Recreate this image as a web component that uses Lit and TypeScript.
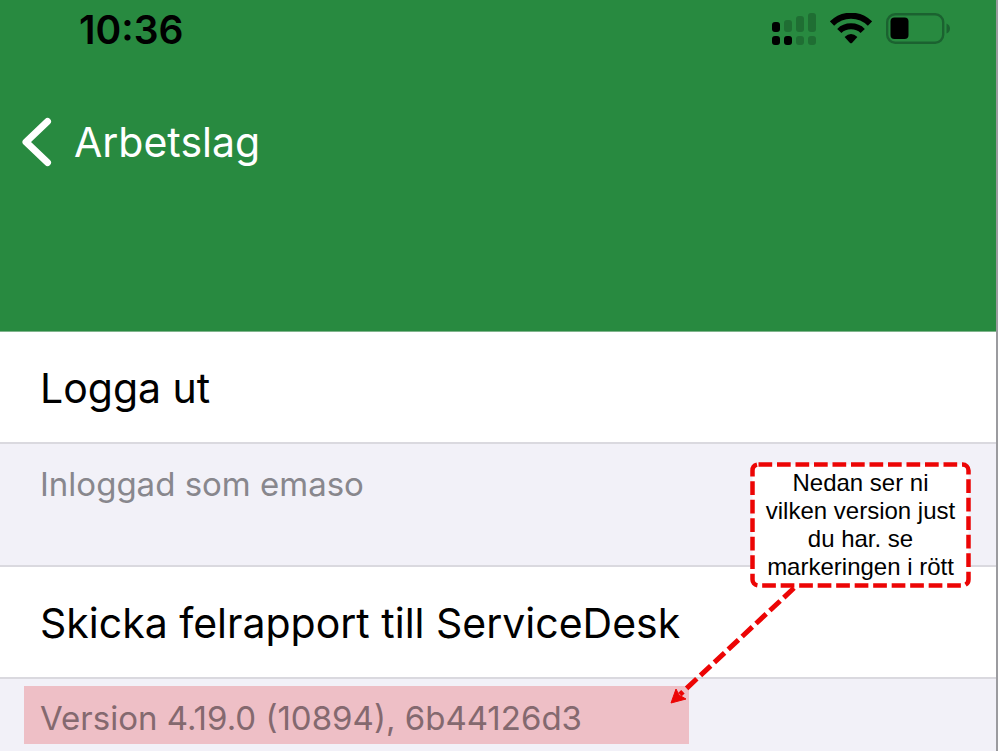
import { LitElement, html, css } from "lit";
import { customElement } from "lit/decorators.js";

@customElement("app-root")
export class AppRoot extends LitElement {
  static styles = css`
    :host {
      display: block;
      font-family: Inter, sans-serif;
      color: #000;
    }
    * {
      box-sizing: border-box;
    }
    .screen {
      position: relative;
      min-height: 100vh;
      margin-right: 2px;
      border-right: 2px solid #9b9b9f;
      background: #f2f1f8;
    }
    .top {
      padding-bottom: 159px;
      background: #288a40;
      border-bottom: 1px solid #7fb48c;
    }
    .status {
      display: flex;
      justify-content: space-between;
      padding: 0 46px 0 79px;
    }
    .time {
      font-size: 39px;
      font-weight: 600;
      line-height: 60px;
    }
    .icons {
      display: flex;
      align-items: center;
      gap: 14px;
      height: 57px;
    }
    .back {
      display: flex;
      align-items: center;
      gap: 22px;
      margin-top: 52px;
      padding: 0 22px;
      border: 0;
      background: none;
      color: #fff;
      font: 400 41px/60px Inter, sans-serif;
    }
    .row {
      display: block;
      width: 100%;
      padding: 2px 40px 0;
      border: 0;
      border-bottom: 2px solid #dad9df;
      background: #fff;
      text-align: left;
      color: #000;
      font: 400 41px/108px Inter, sans-serif;
    }
    .info {
      margin: 0;
      padding: 20px 40px 61px;
      border-bottom: 2px solid #dad9df;
      color: #88878d;
      font-size: 33px;
      line-height: 40px;
    }
    .version {
      width: fit-content;
      margin: 7px 0 0 24px;
      padding: 6px 107px 0 16px;
      background: #eebfc6;
      color: #84696f;
      font-size: 33px;
      line-height: 52px;
    }
    .note {
      position: absolute;
      right: 25px;
      top: 462px;
      width: 221px;
      padding: 7px 12px;
      margin: 0;
      text-align: center;
      font: 24px/28px "Liberation Sans", Arial, sans-serif;
    }
    .frame {
      position: absolute;
      inset: 0;
      width: 100%;
      height: 100%;
    }
    .text {
      position: relative;
    }
    .arrow {
      position: absolute;
      right: 196px;
      top: 584px;
    }
  `;

  render() {
    return html`
      <main class="screen">
        <header class="top">
          <div class="status">
            <time class="time">10:36</time>
            <div class="icons">
              <svg width="44" height="32" viewBox="0 0 44 32" aria-label="Signal">
                <g fill="#1f6e33">
                  <rect x="12" y="7" width="8" height="12" rx="3" />
                  <rect x="24" y="3" width="8" height="16" rx="3" />
                  <rect x="36" width="8" height="19" rx="3" />
                  <rect x="24" y="23" width="8" height="9" rx="3" />
                  <rect x="36" y="23" width="8" height="9" rx="3" />
                </g>
                <rect y="9" width="8" height="10" rx="3" />
                <rect y="23" width="8" height="9" rx="3" />
                <rect x="12" y="23" width="8" height="9" rx="3" />
              </svg>
              <svg width="42" height="32" viewBox="0 0 42 32" aria-label="Wi-Fi">
                <g fill="none" stroke="#000" stroke-width="6">
                  <path d="M2 10.600C12.500 0 29.500 0 40 10.600" />
                  <path d="M9.300 18C15.500 11.800 26.500 11.800 32.700 18" />
                </g>
                <path d="M14.600 24Q21 18.200 27.400 24L22.200 29.700Q21 31 19.800 29.700Z" />
              </svg>
              <svg width="64" height="32" viewBox="0 0 64 32" aria-label="Battery">
                <rect x="1.200" y="1.200" width="56" height="28.500" rx="8" fill="none" stroke="#1b6230" stroke-width="2.400" />
                <rect x="4.500" y="4.500" width="18" height="21.500" rx="4" />
                <path d="M60.500 10.500Q64 12 64 15.500T60.500 20.500Z" fill="#1b6230" />
              </svg>
            </div>
          </div>
          <button class="back">
            <svg width="30" height="50" viewBox="0 0 30 50" fill="none" stroke="#fff" stroke-width="7" stroke-linecap="round" stroke-linejoin="round" aria-hidden="true">
              <path d="M25.500 4.500L4 25L25.500 45.500" />
            </svg>
            Arbetslag
          </button>
        </header>
        <button class="row">Logga ut</button>
        <p class="info">Inloggad som emaso</p>
        <button class="row">Skicka felrapport till ServiceDesk</button>
        <div class="version">Version 4.19.0 (10894), 6b44126d3</div>

        <svg class="arrow" width="130" height="124" viewBox="0 0 130 124" aria-hidden="true">
          <path d="M124 4L10 110.500" stroke="#ec0505" stroke-width="5" stroke-dasharray="14 5" />
          <path d="M1 119L6 105L9 111L16 115Z" fill="#ec0505" stroke="#ec0505" stroke-width="1" />
        </svg>
        <aside class="note">
          <svg class="frame" aria-hidden="true" viewBox="0 0 221 126">
            <rect x="2.500" y="2.500" width="216" height="121" rx="6" fill="#fff" stroke="#ec0505" stroke-width="4.500" stroke-dasharray="13.700 4.800" />
          </svg>
          <span class="text">Nedan ser ni<br />vilken version just<br />du har. se<br />markeringen i rött</span>
        </aside>
      </main>
    `;
  }
}
